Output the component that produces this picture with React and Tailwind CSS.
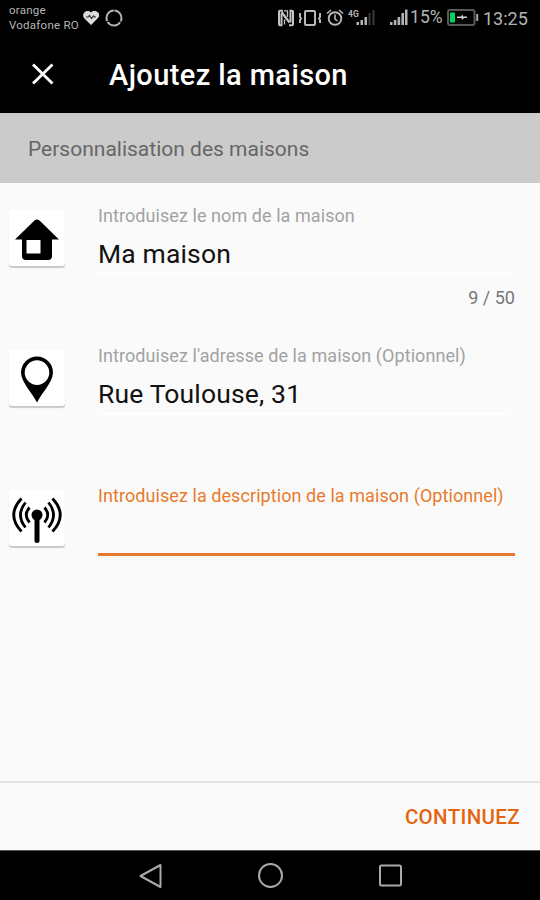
import React, { useState } from "react";

function StatusBar() {
    return (
        <div className="flex items-start h-[38px] bg-black text-[#b4b4b4]">
            <div className="w-[73px] ml-[9px] mt-[3px] text-[11.5px] leading-[15px] tracking-[0.25px] whitespace-nowrap">
                <p>orange</p>
                <p>Vodafone RO</p>
            </div>
            <svg className="mt-[10px] w-[18px] h-[16px]" viewBox="0 0 18 16" fill="none">
                <path d="M9 15 2 8C-1 3.500 5 -1.500 9 2.500C13 -1.500 20 3.500 16 8Z" fill="#dedede" />
                <path d="M4 7h2l1.500 -1.500 2 3 2 -2.500 1 1h1.500" stroke="#333" strokeWidth="1.200" />
            </svg>
            <svg className="ml-[5px] mt-[9px] w-[18px] h-[18px]" viewBox="0 0 18 18" fill="none">
                <circle cx="9" cy="9" r="7.500" stroke="#b4b4b4" strokeWidth="2" strokeDasharray="14.700 1 14.700 1 14.700 1.020" transform="rotate(-86 9 9)" />
            </svg>
            <svg className="ml-[154px] mt-[9px] w-[18px] h-[18px]" viewBox="0 0 18 18" fill="none" stroke="#c4c4c4">
                <path d="M6 1.800H3Q2 1.800 2 2.800V15.200Q2 16.200 3 16.200H4.500V4.500" strokeWidth="2" />
                <path d="M12 16.200H15Q16 16.200 16 15.200V2.800Q16 1.800 15 1.800H13.500V13.500" strokeWidth="2" />
                <path d="M4.500 3 12.500 13.500" strokeWidth="2.200" />
                <path d="M7 1.800H10.500V8M7.500 10.500V15.500" strokeWidth="1.300" />
            </svg>
            <svg className="ml-[3px] mt-[9px] w-[24px] h-[18px]" viewBox="0 0 24 18" fill="none" stroke="#b8b8b8">
                <rect x="7" y="2" width="10" height="14" rx="1" strokeWidth="2" />
                <path d="M2 4V8L3 9.500 2 11V14M22 4V8L21 9.500 22 11V14" strokeWidth="2" />
            </svg>
            <svg className="ml-[4px] mt-[9px] w-[18px] h-[18px]" viewBox="0 0 18 18" fill="none" stroke="#b8b8b8">
                <circle cx="9" cy="9.500" r="6.300" strokeWidth="1.900" />
                <path d="M9 5.500V10L11.500 12M1 4.500 5 1M13 1 17 4.500" strokeWidth="1.600" />
            </svg>
            <svg className="ml-[3px] mt-[8px] w-[28px] h-[19px]" viewBox="0 0 28 19">
                <text x="1" y="8.500" fontSize="8.500" fontWeight="700" fill="#b4b4b4">4G</text>
                <path d="M9.500 14h2.500v3H9.500zM13.500 12h2.500v5h-2.500zM17.500 9h2.500v8h-2.500z" fill="#b4b4b4" />
                <path d="M21.500 5h2v12h-2zM25.500 2h2v15h-2z" fill="#3a3a3a" />
            </svg>
            <svg className="ml-[14px] mt-[8px] w-[19px] h-[19px]" viewBox="0 0 19 19">
                <path d="M1 14h2.500v3H1zM4.800 12h2.600v5H4.800zM8.600 9h2.600v8H8.600zM12.400 5h2.600v12h-2.600zM16 1.500h2.500V17H16z" fill="#b4b4b4" />
            </svg>
            <span className="w-[33px] ml-[2px] mt-[7px] text-[17.5px] leading-[21px] tracking-[0.1px]">15%</span>
            <svg className="ml-[4px] mt-[9px] w-[32px] h-[17px]" viewBox="0 0 32 17">
                <rect x="1" y="1" width="26.500" height="15" rx="2" fill="none" stroke="#585858" strokeWidth="2" />
                <rect x="3" y="3.500" width="5" height="10" fill="#00d45c" />
                <path d="M10 7.500H14L15.500 5.500 16 7.500H20V9H17L15 11 14.500 9H10Z" fill="#d0d0d0" />
                <path d="M30.200 5v7" stroke="#a8a8a8" strokeWidth="2" />
            </svg>
            <span className="ml-[4px] mt-[8px] text-[18px] leading-[21px]">13:25</span>
        </div>
    );
}

function HouseIcon() {
    return (
        <svg className="w-[56px] h-[56px]" viewBox="0 0 56 56">
            <path d="M25.500 10.500Q28 8.500 30.500 10.500L50 29.500H43V46Q43 50 39 50H17Q13 50 13 46V29.500H6ZM17.500 30V43.500H31.500V30Z" fill="#000" fillRule="evenodd" />
        </svg>
    );
}

function PinIcon() {
    return (
        <svg className="w-[56px] h-[56px]" viewBox="0 0 56 56">
            <path d="M28 52.500C24 44 12 32 12 22.500A16 16 0 0 1 44 22.500C44 32 32 44 28 52.500ZM28 10.300A12.300 12.300 0 1 0 28 34.900A12.300 12.300 0 1 0 28 10.300Z" fill="#000" fillRule="evenodd" />
        </svg>
    );
}

function AntennaIcon() {
    return (
        <svg className="w-[56px] h-[56px]" viewBox="0 -1 56 56" fill="none" stroke="#000">
            <circle cx="28" cy="24" r="5.500" fill="#000" stroke="none" />
            <path d="M28 25V49.500" strokeWidth="5" strokeLinecap="round" />
            <path d="M20.500 16.500Q14 24 20.500 31.500M35.500 16.500Q42 24 35.500 31.500" strokeWidth="2.800" />
            <path d="M16.500 11.500Q6.500 24 16.500 36.500M39.500 11.500Q49.500 24 39.500 36.500" strokeWidth="2.800" />
            <path d="M12.500 7.500Q-3 24 12.500 40.500M43.500 7.500Q59 24 43.500 40.500" strokeWidth="2.800" />
        </svg>
    );
}

function Field({ icon, id, label, labelClass, value, onChange, lineClass, counter }) {
    return (
        <div className="flex h-[140px] pl-[9px]">
            <div className="w-[56px] h-[56px] mt-[27px] rounded-[3px] bg-white shadow-[0_2px_1px_rgba(0,0,0,0.2)]">
                {icon}
            </div>
            <div className="w-[417px] ml-[33px] pt-[23px]">
                <label htmlFor={id} className={"block h-[20px] text-[18px] leading-[20px] tracking-[0.07px] whitespace-nowrap " + labelClass}>{label}</label>
                <input
                    id={id}
                    type="text"
                    value={value}
                    onChange={onChange}
                    className="block w-full h-[46px] pt-[8px] text-[26.5px] tracking-[0.15px] text-[#111] bg-transparent focus:outline-none"
                />
                <div className={lineClass} />
                {counter && <p className="mt-[13px] text-right text-[18px] leading-[20px] text-[#777]">{counter}</p>}
            </div>
        </div>
    );
}

function App() {
    const [name, setName] = useState("Ma maison");
    const [address, setAddress] = useState("Rue Toulouse, 31");
    const [description, setDescription] = useState("");

    return (
        <div className="flex flex-col w-[540px] h-[900px] overflow-hidden bg-[#fafafa] font-['Roboto',sans-serif]">
            <StatusBar />
            <header className="flex items-center h-[75px] bg-black text-white">
                <svg className="w-[22px] h-[22px] ml-[32px] mb-[3px]" viewBox="0 0 22 22" stroke="#fff" strokeWidth="2.800">
                    <path d="M1 1.500 20.500 20.500M20.500 1.500 1 20.500" />
                </svg>
                <h1 className="ml-[55px] mb-[2px] text-[29px] font-medium leading-[34px] tracking-[0.4px]">Ajoutez la maison</h1>
            </header>
            <div className="flex items-center h-[70px] pt-[2px] pl-[28px] bg-[#cbcbcb]">
                <h2 className="text-[21px] leading-[26px] text-[#666]">Personnalisation des maisons</h2>
            </div>

            <main className="flex-1">
                <Field
                    id="name"
                    icon={<HouseIcon />}
                    label="Introduisez le nom de la maison"
                    labelClass="text-[#a2a2a2]"
                    value={name}
                    onChange={(e) => setName(e.target.value)}
                    lineClass="h-[3px] mr-[5px] bg-[#fdfdfd]"
                    counter={name.length + " / 50"}
                />
                <Field
                    id="address"
                    icon={<PinIcon />}
                    label="Introduisez l'adresse de la maison (Optionnel)"
                    labelClass="text-[#a2a2a2]"
                    value={address}
                    onChange={(e) => setAddress(e.target.value)}
                    lineClass="h-[3px] mr-[5px] bg-[#fdfdfd]"
                />
                <Field
                    id="description"
                    icon={<AntennaIcon />}
                    label="Introduisez la description de la maison (Optionnel)"
                    labelClass="text-[#e87a2c]"
                    value={description}
                    onChange={(e) => setDescription(e.target.value)}
                    lineClass="h-[3px] mt-[1px] bg-[#e67a30]"
                />
            </main>

            <footer className="flex items-center justify-end h-[69px] pr-[20px] border-t-2 border-[#e4e4e4]">
                <button type="button" className="text-[20.5px] font-medium leading-[24px] tracking-[0.35px] text-[#e4650f]">CONTINUEZ</button>
            </footer>
            <nav className="flex items-center h-[50px] pl-[138px] bg-black border-t border-[#555]">
                <svg className="w-[26px] h-[26px]" viewBox="0 0 26 26" fill="none" stroke="#aaa" strokeWidth="2" strokeLinejoin="round">
                    <path d="M2.500 13 22.500 2V24Z" />
                </svg>
                <svg className="w-[26px] h-[26px] ml-[94px]" viewBox="0 0 26 26" fill="none" stroke="#aaa" strokeWidth="2">
                    <circle cx="12.500" cy="12.500" r="11.500" />
                </svg>
                <svg className="w-[26px] h-[26px] ml-[94px]" viewBox="0 0 26 26" fill="none" stroke="#aaa" strokeWidth="2">
                    <rect x="2" y="2.500" width="21" height="20" rx="1.500" />
                </svg>
            </nav>
        </div>
    );
}

export default App;
